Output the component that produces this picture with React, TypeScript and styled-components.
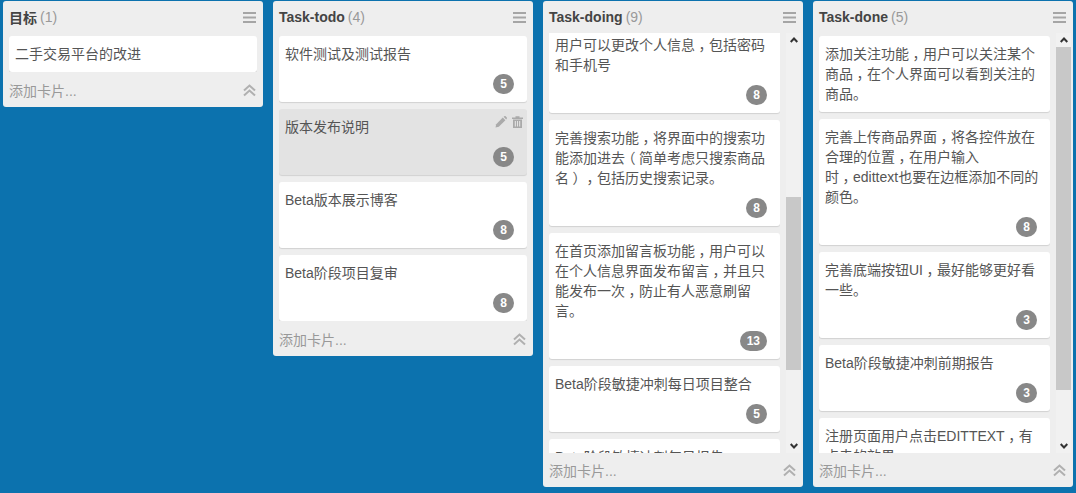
import React, { useLayoutEffect, useRef } from 'react';
import styled, { createGlobalStyle } from 'styled-components';

interface CardData {
  text: string;
  badge?: number;
  hovered?: boolean;
}

interface ScrollInfo {
  offset: number;
  thumbTop: number;
  thumbHeight: number;
}

interface ColumnData {
  title: string;
  count: number;
  cards: CardData[];
  scroll?: ScrollInfo;
}

const columns: ColumnData[] = [
  {
    title: '目标',
    count: 1,
    cards: [{ text: '二手交易平台的改进' }],
  },
  {
    title: 'Task-todo',
    count: 4,
    cards: [
      { text: '软件测试及测试报告', badge: 5 },
      { text: '版本发布说明', badge: 5, hovered: true },
      { text: 'Beta版本展示博客', badge: 8 },
      { text: 'Beta阶段项目复审', badge: 8 },
    ],
  },
  {
    title: 'Task-doing',
    count: 9,
    scroll: { offset: 9, thumbTop: 150, thumbHeight: 173 },
    cards: [
      { text: '用户可以更改个人信息，包括密码\n和手机号', badge: 8 },
      { text: '完善搜索功能，将界面中的搜索功\n能添加进去（简单考虑只搜索商品\n名），包括历史搜索记录。', badge: 8 },
      { text: '在首页添加留言板功能，用户可以\n在个人信息界面发布留言，并且只\n能发布一次，防止有人恶意刷留\n言。', badge: 13 },
      { text: 'Beta阶段敏捷冲刺每日项目整合', badge: 5 },
      { text: 'Beta阶段敏捷冲刺每日报告', badge: 5 },
    ],
  },
  {
    title: 'Task-done',
    count: 5,
    scroll: { offset: 0, thumbTop: 0, thumbHeight: 343 },
    cards: [
      { text: '添加关注功能，用户可以关注某个\n商品，在个人界面可以看到关注的\n商品。' },
      { text: '完善上传商品界面，将各控件放在\n合理的位置，在用户输入\n时，edittext也要在边框添加不同的\n颜色。', badge: 8 },
      { text: '完善底端按钮UI，最好能够更好看\n一些。', badge: 3 },
      { text: 'Beta阶段敏捷冲刺前期报告', badge: 3 },
      { text: '注册页面用户点击EDITTEXT，有\n点击的效果', badge: 3 },
    ],
  },
];

const GlobalStyle = createGlobalStyle`
  html, body {
    margin: 0;
    padding: 0;
    height: 100%;
    background: #0c72ae;
    font-family: "Liberation Sans", "Noto Sans CJK SC", sans-serif;
    overflow: hidden;
  }
`;

const Board = styled.div`
  display: flex;
  align-items: flex-start;
  gap: 10px;
  padding: 1px 3px 0;
`;

const Column = styled.section`
  display: flex;
  flex-direction: column;
  width: 260px;
  flex-shrink: 0;
  background: #eeeeee;
  border-radius: 3px;
`;

const Header = styled.header`
  display: flex;
  align-items: center;
  height: 32px;
  padding: 0 7px 0 6px;
`;

const Title = styled.h2`
  margin: 0;
  font-size: 14px;
  font-weight: 700;
  color: #444444;
`;

const Count = styled.span`
  margin-left: 3px;
  flex: 1;
  font-size: 14px;
  color: #999999;
`;

const ListRow = styled.div<{ $scrolls: boolean }>`
  display: flex;
  height: ${(p) => (p.$scrolls ? '420px' : 'auto')};
  padding: ${(p) => (p.$scrolls ? '0 2px 0 6px' : '0 6px 1px')};
`;

const CardList = styled.div`
  display: flex;
  flex-direction: column;
  gap: 7px;
  flex: 1;
  min-width: 0;
  padding-top: 3px;
  overflow: hidden;
`;

const Card = styled.article<{ $hovered?: boolean; $hasBadge: boolean }>`
  flex-shrink: 0;
  position: relative;
  box-sizing: border-box;
  padding: 8px 6px ${(p) => (p.$hasBadge ? '38px' : '8px')};
  background: ${(p) => (p.$hovered ? '#e3e3e3' : '#ffffff')};
  border-radius: 3px;
  box-shadow: 0 1px 1px rgba(0, 0, 0, 0.12);
  font-size: 14px;
  line-height: 20px;
  color: #555555;
`;

const Line = styled.div`
  white-space: nowrap;
`;

/* half-width glyph with equal padding, so the mark sits centred in its full-width box */
const Punct = styled.span`
  display: inline-block;
  padding: 0 3.5px;
  font-feature-settings: "halt";
`;

const Badge = styled.span`
  position: absolute;
  right: 13px;
  bottom: 8px;
  min-width: 21px;
  height: 20px;
  box-sizing: border-box;
  padding: 0 7px;
  border-radius: 10px;
  background: #888888;
  color: #ffffff;
  font-size: 12px;
  font-weight: 700;
  line-height: 20px;
  text-align: center;
`;

const CardTools = styled.div`
  position: absolute;
  top: 7px;
  right: 4px;
  display: flex;
  gap: 5px;
  color: #aaaaaa;
`;

const ScrollBar = styled.div`
  display: flex;
  flex-direction: column;
  align-items: center;
  width: 15px;
  margin-left: 6px;
  flex-shrink: 0;
  background: #f1f1f1;
`;

const ScrollButton = styled.div`
  display: flex;
  align-items: center;
  justify-content: center;
  width: 100%;
  height: 14px;
  flex-shrink: 0;
  color: #333333;
`;

const ScrollTrack = styled.div`
  flex: 1;
  width: 100%;
`;

const ScrollThumb = styled.div<{ $top: number; $height: number }>`
  margin-top: ${(p) => p.$top}px;
  height: ${(p) => p.$height}px;
  background: #c8c8c8;
`;

const Footer = styled.footer`
  display: flex;
  align-items: center;
  justify-content: space-between;
  height: 34px;
  padding: 0 7px 0 6px;
  font-size: 14px;
  color: #999999;
`;

const MenuIcon = () => (
  <svg width="13" height="11" viewBox="0 0 13 11" fill="#a5a5a5">
    <rect x="0" y="0" width="13" height="2" />
    <rect x="0" y="4.5" width="13" height="2" />
    <rect x="0" y="9" width="13" height="2" />
  </svg>
);

const CollapseIcon = () => (
  <svg width="13" height="13" viewBox="0 0 13 13" fill="none" stroke="#b0b0b0" strokeWidth="2">
    <path d="M1 6.5L6.5 1.5L12 6.5" />
    <path d="M1 11.5L6.5 6.5L12 11.5" />
  </svg>
);

const PencilIcon = () => (
  <svg width="12" height="12" viewBox="0 0 12 12" fill="currentColor">
    <path d="M0.5 11.5L1.2 8.2L7.8 1.6L10.4 4.2L3.8 10.8Z" />
    <path d="M8.6 0.8L9.4 0.2C9.8 -0.1 10.2 -0.1 10.6 0.2L11.8 1.4C12.1 1.8 12.1 2.2 11.8 2.6L11.2 3.4Z" />
  </svg>
);

const TrashIcon = () => (
  <svg width="11" height="12" viewBox="0 0 11 12" fill="currentColor">
    <path d="M0 1.5H3.5V0.3H7.5V1.5H11V3H0Z" />
    <path d="M1 3.6H10V12H1ZM2.8 5V10.6H3.9V5ZM5 5V10.6H6V5ZM7.1 5V10.6H8.2V5Z" fillRule="evenodd" />
  </svg>
);

const Chevron = ({ down }: { down?: boolean }) => (
  <svg width="8" height="6" viewBox="0 0 8 6" fill="none" stroke="currentColor" strokeWidth="2">
    <path d={down ? 'M0.7 1L4 4.5L7.3 1' : 'M0.7 5L4 1.5L7.3 5'} />
  </svg>
);

const CardText = ({ text }: { text: string }) => (
  <>
    {text.split('\n').map((line, lineIndex) => (
      <Line key={lineIndex}>
        {line.split(/([，（）])/).map((part, index) =>
          /^[，（）]$/.test(part) ? <Punct key={index}>{part}</Punct> : part,
        )}
      </Line>
    ))}
  </>
);

const BoardColumn = ({ title, count, cards, scroll }: ColumnData) => {
  const listRef = useRef<HTMLDivElement>(null);

  useLayoutEffect(() => {
    if (listRef.current && scroll) listRef.current.scrollTop = scroll.offset;
  }, [scroll]);

  return (
    <Column>
      <Header>
        <Title>{title}</Title>
        <Count>({count})</Count>
        <MenuIcon />
      </Header>
      <ListRow $scrolls={!!scroll}>
        <CardList ref={listRef}>
          {cards.map((card, index) => (
            <Card key={index} $hovered={card.hovered} $hasBadge={card.badge !== undefined}>
              <CardText text={card.text} />
              {card.hovered && (
                <CardTools>
                  <PencilIcon />
                  <TrashIcon />
                </CardTools>
              )}
              {card.badge !== undefined && <Badge>{card.badge}</Badge>}
            </Card>
          ))}
        </CardList>
        {scroll && (
          <ScrollBar>
            <ScrollButton>
              <Chevron />
            </ScrollButton>
            <ScrollTrack>
              <ScrollThumb $top={scroll.thumbTop} $height={scroll.thumbHeight} />
            </ScrollTrack>
            <ScrollButton>
              <Chevron down />
            </ScrollButton>
          </ScrollBar>
        )}
      </ListRow>
      <Footer>
        添加卡片...
        <CollapseIcon />
      </Footer>
    </Column>
  );
};

const App: React.FC = () => (
  <>
    <GlobalStyle />
    <Board>
      {columns.map((column) => (
        <BoardColumn key={column.title} {...column} />
      ))}
    </Board>
  </>
);

export default App;
